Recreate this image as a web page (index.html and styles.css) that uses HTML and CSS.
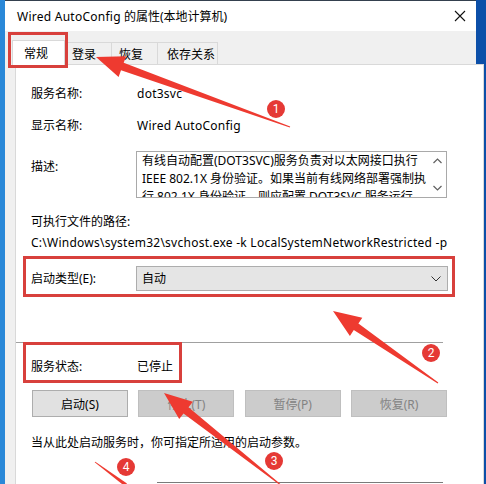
FILE: index.html
```html
<!DOCTYPE html>
<html lang="zh-CN">
<head>
<meta charset="utf-8">
<title>Wired AutoConfig 的属性</title>
<link rel="stylesheet" href="styles.css">
</head>
<body>
<div class="window">
  <div class="titlebar">
    <span class="title"><span class="lat">Wired AutoConfig</span> 的属性(本地计算机)</span>
    <svg class="close" width="12" height="12" viewBox="0 0 12 12"><path d="M1 1L11 11M11 1L1 11" stroke="#111" stroke-width="1.1" fill="none"/></svg>
  </div>
  <div class="tabs">
    <div class="tab active">常规</div>
    <div class="tab w47">登录</div>
    <div class="tab w46">恢复</div>
    <div class="tab w60">依存关系</div>
  </div>
  <div class="panel">
    <div class="row r-name"><span class="label">服务名称:</span><span class="lat">dot3svc</span></div>
    <div class="row r-display"><span class="label">显示名称:</span><span class="lat">Wired AutoConfig</span></div>
    <div class="row r-desc">
      <span class="label desc-label">描述:</span>
      <div class="descbox">
        <div class="desctext">有线自动配置(DOT3SVC)服务负责对以太网接口执行<br>IEEE 802.1X 身份验证。如果当前有线网络部署强制执<br>行 802.1X 身份验证，则应配置 DOT3SVC 服务运行</div>
        <div class="scroll">
          <svg width="9" height="6" viewBox="0 0 9 6"><path d="M0.5 5L4.5 1L8.5 5" stroke="#606060" stroke-width="1.2" fill="none"/></svg>
          <svg width="9" height="6" viewBox="0 0 9 6"><path d="M0.5 1L4.5 5L8.5 1" stroke="#606060" stroke-width="1.2" fill="none"/></svg>
        </div>
      </div>
    </div>
    <div class="line exe-label">可执行文件的路径:</div>
    <div class="line exe-path lat">C:\Windows\system32\svchost.exe -k LocalSystemNetworkRestricted -p</div>
    <div class="row r-startup">
      <span class="label">启动类型(E):</span>
      <div class="combo"><span>自动</span>
        <svg width="10" height="6" viewBox="0 0 10 6"><path d="M0.5 0.5L5 5L9.5 0.5" stroke="#333" stroke-width="1" fill="none"/></svg>
      </div>
    </div>
    <div class="sep"></div>
    <div class="row r-status"><span class="label">服务状态:</span><span>已停止</span></div>
    <div class="buttons">
      <div class="btn">启动(S)</div>
      <div class="btn disabled">停止(T)</div>
      <div class="btn disabled">暂停(P)</div>
      <div class="btn disabled">恢复(R)</div>
    </div>
    <div class="line hint">当从此处启动服务时，你可指定所适用的启动参数。</div>
    <div class="params"></div>
  </div>
</div>
<svg class="annot" width="486" height="484" viewBox="0 0 486 484">
  <g fill="none" stroke="#d8403c" stroke-width="3">
    <rect x="9.5" y="33.5" width="57" height="33"/>
    <rect x="24.5" y="257.5" width="429" height="38"/>
    <rect x="24.5" y="343.5" width="156" height="38"/>
  </g>
  <g fill="#ee3a30">
    <polygon points="96,57 126.1,56.2 123.7,62.8 290.2,126.5 289.8,127.5 121,70.3 118.6,76.9"/>
    <polygon points="333,311 362.3,317.8 358.4,323.5 438.3,382.6 437.7,383.4 353.8,330.1 349.9,335.9"/>
    <polygon points="164,393 192.8,401.7 188.5,407.2 282.3,485.6 281.7,486.4 183.5,413.5 179.2,419"/>
    <polygon points="94.7,462.3 95.3,461.7 127,483.5 124.5,486"/>
  </g>
  <g fill="#e53935">
    <circle cx="276" cy="109" r="9"/>
    <circle cx="431" cy="353" r="9"/>
    <circle cx="274" cy="461" r="9"/>
    <circle cx="126" cy="467" r="9"/>
  </g>
  <g fill="#fff" font-family="Roboto, 'Liberation Sans', sans-serif" font-size="12" text-anchor="middle">
    <text x="276" y="113.3">1</text>
    <text x="431" y="357.3">2</text>
    <text x="274" y="465.3">3</text>
    <text x="126" y="471.3">4</text>
  </g>
</svg>
</body>
</html>
```
FILE: styles.css
```css
html, body {
  margin: 0;
  padding: 0;
}
body {
  width: 486px;
  height: 484px;
  overflow: hidden;
  position: relative;
  background: linear-gradient(90deg, #2a88d8 0, #2a88d8 5px, #0c4fa8 5px);
  font-family: "Noto Sans", "Noto Sans CJK SC", sans-serif;
  font-size: 12px;
  color: #000;
}
.lat {
  letter-spacing: 0.25px;
}
.window {
  margin-left: 5px;
  width: 471px;
  height: 484px;
  background: #f0f0f0;
}
.titlebar {
  height: 30px;
  border-top: 1px solid #34404e;
  background: #fff;
  display: flex;
  align-items: center;
  justify-content: space-between;
  padding: 0 8px 0 12px;
}
.title {
  font-size: 12px;
}
.close {
  margin-right: 2px;
}
.tabs {
  display: flex;
  align-items: flex-end;
  height: 25px;
  margin-top: 9px;
  margin-left: 7px;
}
.tab {
  box-sizing: border-box;
  height: 22px;
  margin-bottom: 1px;
  padding-left: 7px;
  border-top: 1px solid #d9d9d9;
  border-right: 1px solid #d9d9d9;
  display: flex;
  align-items: center;
  background: #f0f0f0;
}
.tab.active {
  position: relative;
  z-index: 1;
  width: 53px;
  height: 25px;
  margin-bottom: 0;
  padding-left: 11px;
  border-left: 1px solid #d9d9d9;
  background: #fff;
}
.w47 { width: 47px; }
.w46 { width: 46px; }
.w60 { width: 60px; padding-left: 9px; }
.panel {
  margin-top: -1px;
  margin-left: 10px;
  width: 452px;
  height: 440px;
  border: 1px solid #d9d9d9;
  background: #fff;
  padding-left: 15px;
  box-sizing: content-box;
}
.row {
  display: flex;
  align-items: center;
  line-height: 20px;
}
.label {
  width: 106px;
  flex: none;
}
.r-name { margin-top: 19px; }
.r-display { margin-top: 12px; }
.r-desc {
  margin-top: 15px;
  align-items: flex-start;
}
.desc-label {
  padding-top: 6px;
}
.descbox {
  margin-left: -1px;
  width: 311px;
  height: 47px;
  box-sizing: border-box;
  border: 1px solid #a9a9a9;
  display: flex;
  overflow: hidden;
}
.desctext {
  flex: 1;
  padding-left: 5px;
  line-height: 18px;
  margin-top: 0;
  white-space: nowrap;
  overflow: hidden;
}
.scroll {
  width: 17px;
  flex: none;
  display: flex;
  flex-direction: column;
  align-items: center;
  justify-content: space-between;
  padding: 6px 0 6px;
  box-sizing: border-box;
}
.line {
  line-height: 20px;
}
.exe-label { margin-top: 14px; }
.exe-path { margin-top: 1px; white-space: nowrap; }
.r-startup {
  margin-top: 13px;
  height: 25px;
}
.combo {
  margin-left: -1px;
  width: 312px;
  height: 25px;
  box-sizing: border-box;
  border: 1px solid #adadad;
  background: #e5e5e5;
  display: flex;
  align-items: center;
  justify-content: space-between;
  padding: 0 6px 0 5px;
}
.sep {
  margin-top: 51px;
  margin-left: -15px;
  width: 427px;
  height: 1px;
  background: #a0a0a0;
}
.r-status { margin-top: 14px; }
.buttons {
  margin-top: 13px;
  margin-left: 1px;
  width: 415px;
  display: flex;
  justify-content: space-between;
}
.btn {
  width: 96px;
  height: 27px;
  box-sizing: border-box;
  border: 1px solid #adadad;
  background: #e1e1e1;
  display: flex;
  align-items: center;
  justify-content: center;
}
.btn.disabled {
  border-color: #bfbfbf;
  background: #cccccc;
  color: #838383;
}
.hint { margin-top: 16px; }
.params {
  margin-top: 29px;
  margin-left: 126px;
  width: 286px;
  height: 22px;
  border-top: 1px solid #7a7a7a;
}
.annot {
  position: absolute;
  left: 0;
  top: 0;
  pointer-events: none;
}
```
